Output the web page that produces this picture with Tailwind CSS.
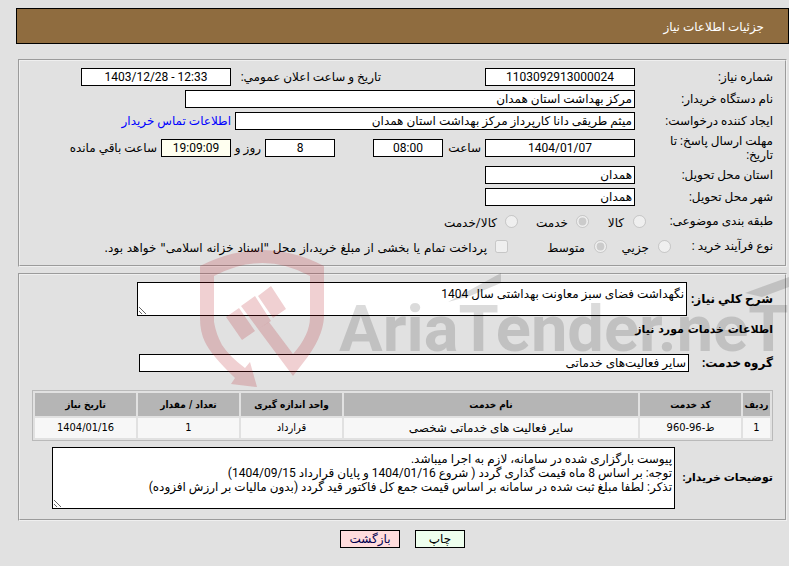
<!DOCTYPE html>
<html lang="fa" dir="rtl">
<head>
    <meta charset="UTF-8">
    <meta name="viewport" content="width=device-width, initial-scale=1.0">
    <title>جزئیات اطلاعات نیاز</title>
    <script src="https://cdn.jsdelivr.net/npm/@tailwindcss/browser@4"></script>
</head>
<body class="relative bg-[#e1e1e1] pt-2 text-black text-[12px] leading-[14px] font-['Roboto','DejaVu_Sans',sans-serif]">
    <!-- Title bar -->
    <header class="ml-4 flex h-9 items-center border border-black bg-[#8f6c3f] px-6">
        <h1 class="pt-[2px] text-white">جزئیات اطلاعات نیاز</h1>
    </header>

    <main class="mr-[2px] ml-[18px] mt-[15px]">
        <!-- Need details -->
        <fieldset class="flex flex-col gap-1 border-2 [border-style:groove] border-[#efefef] px-3 pt-[7px] pb-[9px]">
            <div class="flex items-center">
                <label for="needNo" class="w-[138px]">شماره نیاز:</label>
                <input id="needNo" type="text" readonly value="1103092913000024" class="h-[18px] w-[150px] border border-black bg-white text-center">
                <label for="announce" class="mr-[104px] w-[150px] whitespace-nowrap">تاریخ و ساعت اعلان عمومي:</label>
                <input id="announce" type="text" dir="ltr" readonly value="1403/12/28 - 12:33" class="h-[18px] w-[150px] border border-black bg-white text-center">
            </div>
            <div class="flex items-center">
                <label for="buyer" class="w-[138px]">نام دستگاه خریدار:</label>
                <input id="buyer" type="text" readonly value="مرکز بهداشت استان همدان" class="h-[18px] w-[450px] border border-black bg-white px-[2px]">
            </div>
            <div class="flex items-center">
                <label for="creator" class="w-[138px]">ایجاد کننده درخواست:</label>
                <input id="creator" type="text" readonly value="میثم طریقی دانا کارپرداز مرکز بهداشت استان همدان" class="h-[18px] w-[400px] border border-black bg-white px-[2px]">
                <a href="#" class="mr-1 text-[#0000ff]">اطلاعات تماس خریدار</a>
            </div>
            <div class="flex items-center">
                <label for="deadline" class="w-[138px] pl-4">مهلت ارسال پاسخ: تا تاریخ:</label>
                <input id="deadline" type="text" dir="ltr" readonly value="1404/01/07" class="h-[18px] w-[150px] border border-black bg-white text-center">
                <label for="hour" class="w-[42px] pr-1">ساعت</label>
                <input id="hour" type="text" dir="ltr" readonly value="08:00" class="h-[18px] w-[70px] border border-black bg-white text-center">
                <input type="text" aria-label="روز" readonly value="8" class="mr-[38px] h-[18px] w-[70px] border border-black bg-white text-center">
                <label for="remain" class="w-[34px] whitespace-nowrap pr-1">روز و</label>
                <input id="remain" type="text" dir="ltr" readonly value="19:09:09" class="h-[18px] w-[70px] border border-black bg-[#fffff0] text-center">
                <span class="mr-1">ساعت باقي مانده</span>
            </div>
            <div class="flex items-center">
                <label for="province" class="w-[138px]">استان محل تحویل:</label>
                <input id="province" type="text" readonly value="همدان" class="h-[18px] w-[150px] border border-black bg-white px-[2px]">
            </div>
            <div class="flex items-center">
                <label for="city" class="w-[138px]">شهر محل تحویل:</label>
                <input id="city" type="text" readonly value="همدان" class="h-[18px] w-[150px] border border-black bg-white px-[2px]">
            </div>
            <div class="flex h-[22px] items-center">
                <span class="w-[127px]">طبقه بندی موضوعی:</span>
                <input id="goods" type="radio" name="kind" disabled class="size-[13px]">
                <label for="goods" class="w-11 pr-[9px] pt-1">کالا</label>
                <input id="service" type="radio" name="kind" disabled checked class="size-[13px]">
                <label for="service" class="w-[58px] pr-2 pt-1">خدمت</label>
                <input id="both" type="radio" name="kind" disabled class="size-[13px]">
                <label for="both" class="pr-2 pt-1">کالا/خدمت</label>
            </div>
            <div class="flex h-5 items-center">
                <span class="w-[102px]">نوع فرآیند خرید :</span>
                <input id="small" type="radio" name="size" disabled class="size-[13px]">
                <label for="small" class="w-[51px] pr-[9px] pt-1">جزيي</label>
                <input id="medium" type="radio" name="size" disabled checked class="size-[13px]">
                <label for="medium" class="w-[86px] pr-[9px] pt-1">متوسط</label>
                <input id="treasury" type="checkbox" disabled class="size-[13px]">
                <label for="treasury" class="whitespace-nowrap pr-2 pt-1 font-['DejaVu_Sans',sans-serif]">پرداخت تمام یا بخشی از مبلغ خرید،از محل "اسناد خزانه اسلامی" خواهد بود.</label>
            </div>
        </fieldset>

        <!-- Services -->
        <fieldset class="mt-[6px] border-2 [border-style:groove] border-[#efefef] px-3 pt-[7px] pb-[10px]">
            <div class="flex items-center">
                <label for="desc" class="w-[86px] whitespace-nowrap font-bold">شرح کلي نیاز:</label>
                <textarea id="desc" readonly class="block h-[34px] w-[550px] resize overflow-hidden border border-black bg-white px-[2px] py-1">نگهداشت فضای سبز معاونت بهداشتی سال 1404</textarea>
            </div>
            <h2 class="mt-[7px] text-[11px] font-bold font-['DejaVu_Sans',sans-serif]">اطلاعات خدمات مورد نیاز</h2>
            <div class="mt-[17px] flex items-center">
                <label for="group" class="w-[84px] font-bold">گروه خدمت:</label>
                <input id="group" type="text" readonly value="سایر فعالیت‌های خدماتی" class="h-[18px] w-[550px] border border-black bg-white px-[2px]">
            </div>
            <table class="mt-[18px] w-full table-fixed border-separate border-spacing-[2px] border border-[#b9b9b9] text-center text-[11px] font-['DejaVu_Sans_Condensed','DejaVu_Sans',sans-serif]">
                <thead class="text-[10px]">
                    <tr class="h-[23px] bg-[#b5b5b5] whitespace-nowrap">
                        <th class="w-[27px]">ردیف</th>
                        <th class="w-[101px]">کد خدمت</th>
                        <th>نام خدمت</th>
                        <th class="w-[101px]">واحد اندازه گیری</th>
                        <th class="w-[101px]">تعداد / مقدار</th>
                        <th class="w-[101px]">تاریخ نیاز</th>
                    </tr>
                </thead>
                <tbody>
                    <tr class="h-5 bg-[#f7f7f7]">
                        <td>1</td>
                        <td>ط-96-960</td>
                        <td class="text-[12px] font-['Roboto','DejaVu_Sans',sans-serif]">سایر فعالیت های خدماتی شخصی</td>
                        <td>قرارداد</td>
                        <td>1</td>
                        <td>1404/01/16</td>
                    </tr>
                </tbody>
            </table>
            <div class="mt-[6px] flex items-center">
                <label for="notes" class="w-[98px] whitespace-nowrap text-[11px] font-bold">توضیحات خریدار:</label>
                <textarea id="notes" readonly class="block h-[62px] w-[623px] resize overflow-hidden border border-black bg-white px-[2px] py-1">پیوست بارگزاری شده در سامانه، لازم به اجرا میباشد.
توجه: بر اساس 8 ماه قیمت گذاری گردد ( شروع 1404/01/16 و پایان قرارداد 1404/09/15)
تذکر: لطفا مبلغ ثبت شده در سامانه بر اساس قیمت جمع کل فاکتور قید گردد (بدون مالیات بر ارزش افزوده)</textarea>
            </div>
        </fieldset>
    </main>

    <!-- Actions -->
    <div class="mt-[9px] mr-[2px] ml-[18px] flex justify-center gap-[15px]">
        <button type="button" class="h-[18px] w-[50px] border border-black bg-[#eeffee]">چاپ</button>
        <button type="button" class="h-[18px] w-[60px] border border-black bg-[#ffdddd] text-[#000050]">بازگشت</button>
    </div>

    <!-- Watermark -->
    <svg class="pointer-events-none absolute top-[248px] right-0" width="589" height="142" viewBox="200 248 589 142" direction="ltr" aria-hidden="true">
        <g fill="#b4141e" fill-opacity="0.2">
            <path d="M200 266Q263 234 324 266V317Q323 338 303 363L293 376L258 329L269 322L293 354Q310 335 310 317V276Q263 250 214 276V322Q216 334 222 345Q230 357 245 368L250 362L257 387L231 384L235 378Q211 355 205 342Q200 332 200 318Z"/>
            <path d="M239 308L255 331L242 340L226 317ZM255 296L271 321L258 329L241 306ZM271 286L286 309L273 318L258 296Z"/>
        </g>
        <g fill="#000" fill-opacity="0.14">
            <path d="M448 302L501 273V283L470 296ZM745 293L789 277V287L762 297Z"/>
            <text x="339" y="351" font-family="Roboto,'Liberation Sans',sans-serif" font-size="65" font-weight="700">AriaTender.neT</text>
        </g>
    </svg>
</body>
</html>
